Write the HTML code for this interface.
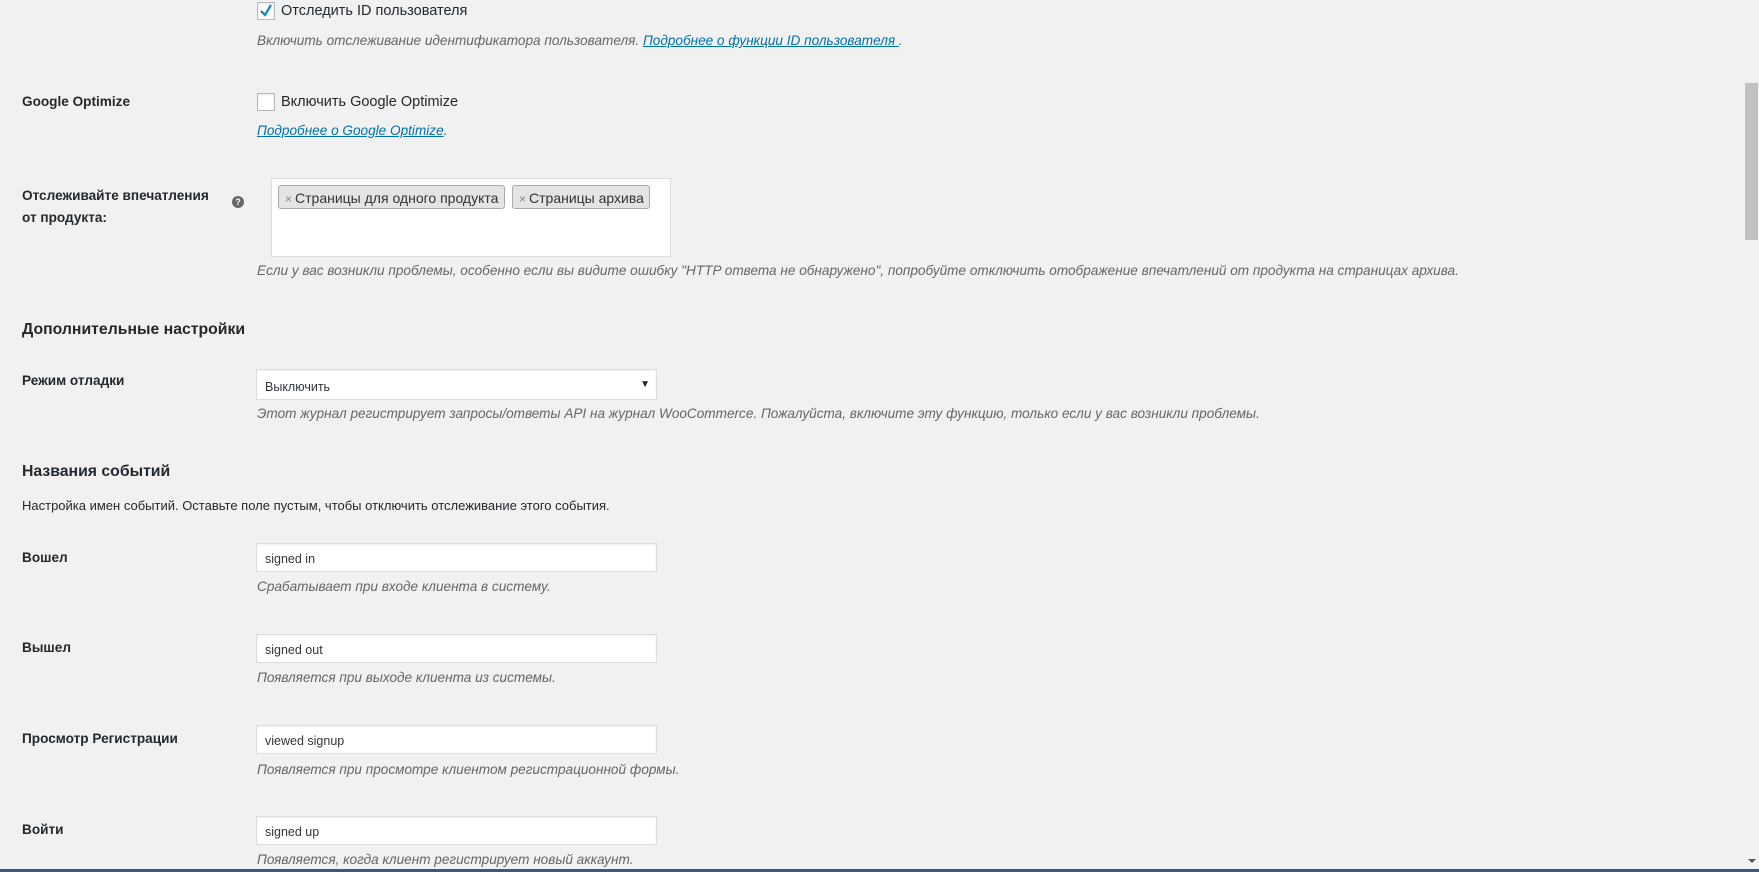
<!DOCTYPE html>
<html><head><meta charset="utf-8"><style>
html,body{margin:0;padding:0;width:1759px;height:872px;overflow:hidden;background:#f1f1f1;font-family:"Liberation Sans","DejaVu Sans",sans-serif;color:#23282d}
.a{position:absolute;white-space:nowrap;line-height:1}
.lbl{font-weight:bold;font-size:13.6px;left:22px}
.d{font-style:italic;color:#666;font-size:13.6px;left:257px}
.t{font-size:14.5px}
a{color:#0073aa;text-decoration:underline}
.cb{position:absolute;left:257px;width:16px;height:16px;border:1px solid #b4b9be;background:#fff;box-shadow:inset 0 1px 2px rgba(0,0,0,.1)}
.inp{position:absolute;left:256px;width:401px;height:28px;border:1px solid #ddd;background:#fff;box-shadow:inset 0 1px 2px rgba(0,0,0,.07);box-sizing:border-box;font-size:12.5px;padding:8px 0 0 8px;color:#32373c}
.h{font-weight:bold;font-size:15.8px;left:22px}
.tag{position:absolute;top:185px;height:24px;background:#e4e4e4;border:1px solid #aaa;border-radius:3px;box-sizing:border-box;font-size:14px;padding:4px 6px 0 6px;white-space:nowrap;color:#333}
.tag span{color:#888;font-size:12px;margin-right:3px}
</style></head><body>
<div class="cb" style="top:2px"><svg width="16" height="16" viewBox="0 0 16 16" style="position:absolute;left:0;top:0"><path d="M3 8 L7 12 L13 2" fill="none" stroke="#1e8cbe" stroke-width="2.4"/></svg></div>
<div class="a t" style="left:281px;top:4px">Отследить ID пользователя</div>
<div class="a d" style="top:34px">Включить отслеживание идентификатора пользователя. <a>Подробнее о функции ID пользователя </a>.</div>

<div class="a lbl" style="top:95px">Google Optimize</div>
<div class="cb" style="top:93px"></div>
<div class="a t" style="left:281px;top:95px">Включить Google Optimize</div>
<div class="a d" style="top:124px"><a>Подробнее о Google Optimize</a>.</div>

<div class="a lbl" style="top:185px;line-height:22px">Отслеживайте впечатления<br>от продукта:</div>
<div style="position:absolute;left:232px;top:196px;width:12px;height:12px;border-radius:50%;background:#666;color:#fff;font-size:9px;font-weight:bold;text-align:center;line-height:12px">?</div>
<div style="position:absolute;left:271px;top:178px;width:400px;height:79px;background:#fff;border:1px solid #ddd;box-sizing:border-box"></div>
<div class="tag" style="left:278px;width:227px"><span>×</span>Страницы для одного продукта</div>
<div class="tag" style="left:512px;width:138px"><span>×</span>Страницы архива</div>
<div class="a d" style="top:264px">Если у вас возникли проблемы, особенно если вы видите ошибку "HTTP ответа не обнаружено", попробуйте отключить отображение впечатлений от продукта на страницах архива.</div>

<div class="a h" style="top:322px">Дополнительные настройки</div>
<div class="a lbl" style="top:374px">Режим отладки</div>
<div class="inp" style="top:369px;height:31px;padding-top:10px">Выключить<span style="position:absolute;right:6px;top:9px;font-size:10px;color:#222">▼</span></div>
<div class="a d" style="top:407px">Этот журнал регистрирует запросы/ответы API на журнал WooCommerce. Пожалуйста, включите эту функцию, только если у вас возникли проблемы.</div>

<div class="a h" style="top:464px">Названия событий</div>
<div class="a" style="left:22px;top:499px;font-size:13px;color:#23282d">Настройка имен событий. Оставьте поле пустым, чтобы отключить отслеживание этого события.</div>

<div class="a lbl" style="top:551px">Вошел</div>
<div class="inp" style="top:543px;height:29px">signed in</div>
<div class="a d" style="top:580px">Срабатывает при входе клиента в систему.</div>

<div class="a lbl" style="top:641px">Вышел</div>
<div class="inp" style="top:634px;height:29px">signed out</div>
<div class="a d" style="top:671px">Появляется при выходе клиента из системы.</div>

<div class="a lbl" style="top:732px">Просмотр Регистрации</div>
<div class="inp" style="top:725px;height:29px">viewed signup</div>
<div class="a d" style="top:763px">Появляется при просмотре клиентом регистрационной формы.</div>

<div class="a lbl" style="top:823px">Войти</div>
<div class="inp" style="top:816px;height:29px">signed up</div>
<div class="a d" style="top:853px">Появляется, когда клиент регистрирует новый аккаунт.</div>

<div style="position:absolute;left:1745px;top:83px;width:13px;height:157px;background:#c1c1c1"></div>
<div style="position:absolute;left:1748px;top:859px;width:8px;height:0;border-left:4px solid transparent;border-right:4px solid transparent;border-top:4px solid #555;box-sizing:border-box"></div>
<div style="position:absolute;left:0;top:869px;width:1759px;height:3px;background:#3c5a78"></div>
</body></html>
